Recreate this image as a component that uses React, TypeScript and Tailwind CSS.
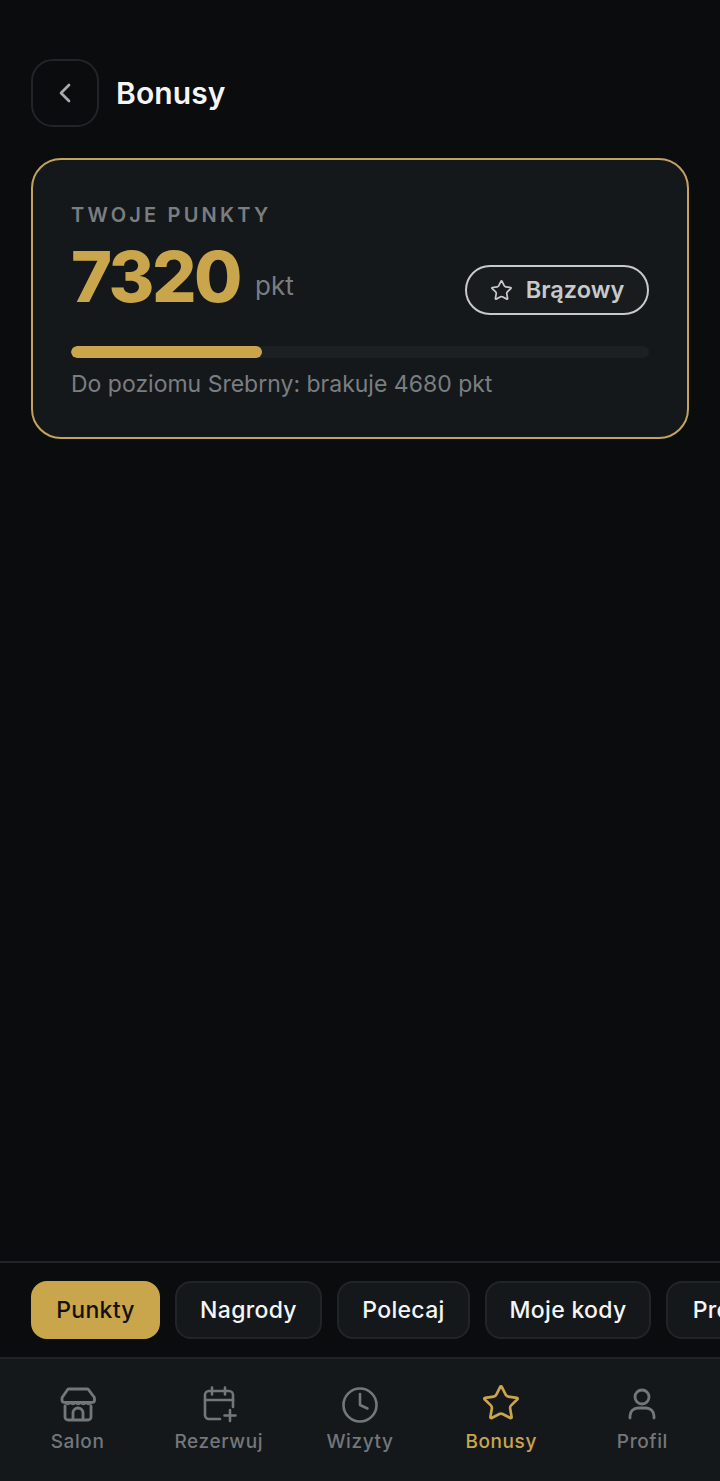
import { ChevronLeft, Star } from 'lucide-react';
import { ReactElement } from 'react';

const GOLD = 'text-[#c9a54c]';

function SalonIcon() {
  return (
    <svg width="38" height="38" viewBox="0 0 38 38" fill="none" stroke="currentColor" strokeWidth="2.800" strokeLinecap="round" strokeLinejoin="round">
      <path d="M10 3h18a2 2 0 0 1 1.500.7l5.500 7.300a2 2 0 0 1 .5 1.300v2a2 2 0 0 1-2 2H5a2 2 0 0 1-2-2v-2a2 2 0 0 1 .5-1.300L8.500 3.700A2 2 0 0 1 10 3z" />
      <path d="M6 16.500c1 2.500 4 2.500 5.200 0 1 2.500 4 2.500 5.200 0 1 2.500 4 2.500 5.200 0 1 2.500 4 2.500 5.200 0 1 2.500 4 2.500 5.200 0" strokeWidth="1.800" />
      <path d="M6 20v11a3 3 0 0 0 3 3h20a3 3 0 0 0 3-3V20" />
      <path d="M14 33v-6a5 5 0 0 1 10 0v6" />
    </svg>
  );
}

function RezerwujIcon() {
  return (
    <svg width="38" height="38" viewBox="0 0 38 38" fill="none" stroke="currentColor" strokeWidth="2.600" strokeLinecap="round" strokeLinejoin="round">
      <path d="M20 33H9a4 4 0 0 1-4-4V9a4 4 0 0 1 4-4h20a4 4 0 0 1 4 4v12" />
      <path d="M5 14h28" />
      <path d="M12 1.500v7M25 1.500v7" />
      <path d="M30 24v11M24.500 29.500h11" />
    </svg>
  );
}

function WizytyIcon() {
  return (
    <svg width="38" height="38" viewBox="0 0 38 38" fill="none" stroke="currentColor" strokeWidth="2.600" strokeLinecap="round" strokeLinejoin="round">
      <circle cx="19" cy="19" r="16.500" />
      <path d="M19 8v11l7.500 3.500" />
    </svg>
  );
}

function ProfilIcon() {
  return (
    <svg width="38" height="38" viewBox="0 0 38 38" fill="none" stroke="currentColor" strokeWidth="2.800" strokeLinecap="round" strokeLinejoin="round">
      <circle cx="19" cy="11" r="7" />
      <path d="M7 32v-2a8 8 0 0 1 8-8h8a8 8 0 0 1 8 8v2" />
    </svg>
  );
}

const tabs = [
  { label: 'Punkty', width: 'w-[129px]', active: true },
  { label: 'Nagrody', width: 'w-[147px]', active: false },
  { label: 'Polecaj', width: 'w-[133px]', active: false },
  { label: 'Moje kody', width: 'w-[166px]', active: false },
  { label: 'Promocje', width: 'w-[160px]', active: false },
];

const navItems: { label: string; icon: ReactElement; active?: boolean }[] = [
  { label: 'Salon', icon: <SalonIcon /> },
  { label: 'Rezerwuj', icon: <RezerwujIcon /> },
  { label: 'Wizyty', icon: <WizytyIcon /> },
  { label: 'Bonusy', icon: <Star size={40} strokeWidth={1.600} className="-translate-y-[2px]" />, active: true },
  { label: 'Profil', icon: <ProfilIcon /> },
];

export default function App() {
  return (
    <div className="flex h-[1481px] w-[720px] flex-col overflow-hidden bg-[#0a0c0e] font-['Inter',sans-serif] text-white">
      <main className="flex-1 px-[31px] pt-[59px]">
        <header className="flex items-center gap-[17px]">
          <button className="flex h-[68px] w-[68px] items-center justify-center rounded-[22px] border-2 border-[#212528] text-[#a9acaf]">
            <ChevronLeft size={32} strokeWidth={2} />
          </button>
          <h1 className="text-[30px] font-semibold leading-none tracking-[0.100px] text-[#f5f5f5]">Bonusy</h1>
        </header>

        <section className="mt-[31px] h-[281px] rounded-[30px] border-2 border-[#c4a45c] bg-[#14181b] px-[38px] pt-[43px]">
          <div className="text-[20px] font-semibold leading-[24px] tracking-[3.200px] text-[#7a7e81]">TWOJE PUNKTY</div>
          <div className="mt-[9px] flex items-end justify-between">
            <div className="flex items-baseline gap-[15px]">
              <span className={`text-[70px] font-extrabold leading-[82px] tracking-[-2.500px] ${GOLD}`}>7320</span>
              <span className="-translate-y-[7px] text-[26px] leading-none text-[#7a7e81]">pkt</span>
            </div>
            <div className="mb-[3px] flex h-[50px] w-[184px] items-center justify-center gap-[13px] rounded-full border-2 border-[#c8c9ca] bg-[#181c1f] text-[#c8c9ca]">
              <Star size={23} strokeWidth={1.800} />
              <span className="text-[23.500px] font-semibold leading-none">Brązowy</span>
            </div>
          </div>
          <div className="mt-[28px] h-[12px] overflow-hidden rounded-full bg-[#1c2023]">
            <div className="h-full w-[33%] rounded-full bg-[#c9a54c]" />
          </div>
          <p className="mt-[11px] text-[23px] leading-[30px] text-[#7a7e81]">
            Do poziomu Srebrny: brakuje 4680 pkt
          </p>
        </section>
      </main>

      <nav className="flex h-[98px] shrink-0 items-center gap-[15px] overflow-hidden border-y-2 border-[#212528] pl-[31px]">
        {tabs.map(tab => (
          <div
            key={tab.label}
            className={`flex h-[58px] shrink-0 items-center justify-center rounded-[16px] border-2 pt-[1px] text-[23px] font-medium leading-none tracking-[0.300px] ${tab.width} ${
              tab.active
                ? 'border-[#c9a54c] bg-[#c9a54c] text-[#14110a]'
                : 'border-[#212528] bg-[#14181b] text-[#f5f5f5]'
            }`}
          >
            {tab.label}
          </div>
        ))}
      </nav>

      <footer className="grid h-[122px] shrink-0 grid-cols-5 bg-[#14181b] px-[7px] pt-[27px]">
        {navItems.map(item => (
          <div
            key={item.label}
            className={`flex flex-col items-center ${item.active ? GOLD : 'text-[#73777a]'}`}
          >
            <div className="flex h-[38px] items-center justify-center">{item.icon}</div>
            <span className="mt-[6px] text-[19px] font-medium leading-[24px] tracking-[0.600px]">{item.label}</span>
          </div>
        ))}
      </footer>
    </div>
  );
}
